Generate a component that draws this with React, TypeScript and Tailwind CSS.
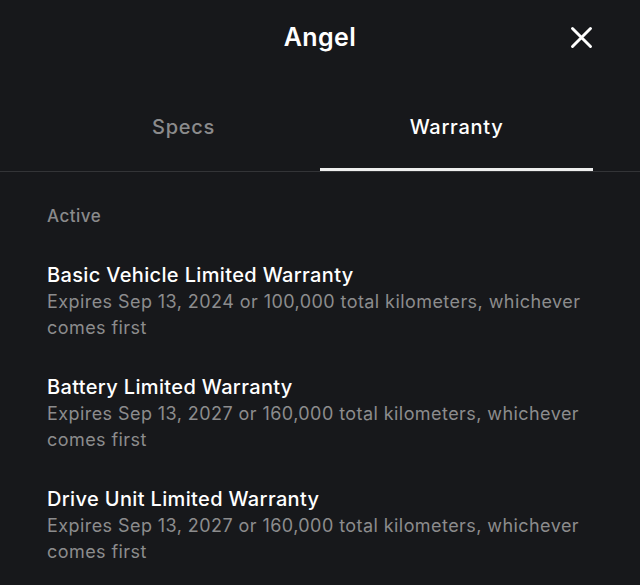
import React, { useState } from 'react';

const WARRANTIES = [
  { title: 'Basic Vehicle Limited Warranty', detail: 'Expires Sep 13, 2024 or 100,000 total kilometers, whichever comes first' },
  { title: 'Battery Limited Warranty', detail: 'Expires Sep 13, 2027 or 160,000 total kilometers, whichever comes first' },
  { title: 'Drive Unit Limited Warranty', detail: 'Expires Sep 13, 2027 or 160,000 total kilometers, whichever comes first' },
];

const App: React.FC = () => {
  const [tab, setTab] = useState<'specs' | 'warranty'>('warranty');

  return (
    <div className="w-[640px] h-[585px] overflow-hidden bg-[#17181b] text-white font-['Inter',sans-serif]">
      {/* Header */}
      <div className="relative h-[75px] flex items-center justify-center">
        <h1 className="text-[25px] font-semibold tracking-[0.4px]">Angel</h1>
        <button className="absolute right-[45px] top-[24px] text-white">
          <svg width="27" height="27" viewBox="0 0 24 24" fill="none" stroke="currentColor" strokeWidth="2.6" strokeLinecap="round">
            <path d="M4 4 20 20M20 4 4 20" />
          </svg>
        </button>
      </div>

      {/* Tabs */}
      <div className="border-b border-[#333437]">
        <div className="flex px-[47px]">
          {(['specs', 'warranty'] as const).map((t) => (
            <button
              key={t}
              onClick={() => setTab(t)}
              className={`flex-1 h-[96px] pt-[40px] flex flex-col items-center justify-between text-[20px] font-medium tracking-[0.7px] ${tab === t ? 'text-white' : 'text-[#8b8b8c]'}`}
            >
              <span className="leading-[24px]">{t === 'specs' ? 'Specs' : 'Warranty'}</span>
              <span className={`w-full h-[3px] ${tab === t ? 'bg-[#eeeeee]' : 'bg-transparent'}`}></span>
            </button>
          ))}
        </div>
      </div>

      {/* Content */}
      <div className="px-[47px] pt-[34px]">
        <div className="text-[17px] leading-[20px] font-medium text-[#8a8a8b] tracking-[0.5px]">Active</div>
        <div className="mt-[37px] flex flex-col gap-[34px]">
          {WARRANTIES.map((w) => (
            <div key={w.title}>
              <div className="text-[20px] leading-[24px] font-medium tracking-[0.35px]">{w.title}</div>
              <div className="mt-[2px] text-[18px] leading-[26px] text-[#8c8c8d] tracking-[0.43px] w-[546px]">{w.detail}</div>
            </div>
          ))}
        </div>
      </div>
    </div>
  );
};

export default App;
